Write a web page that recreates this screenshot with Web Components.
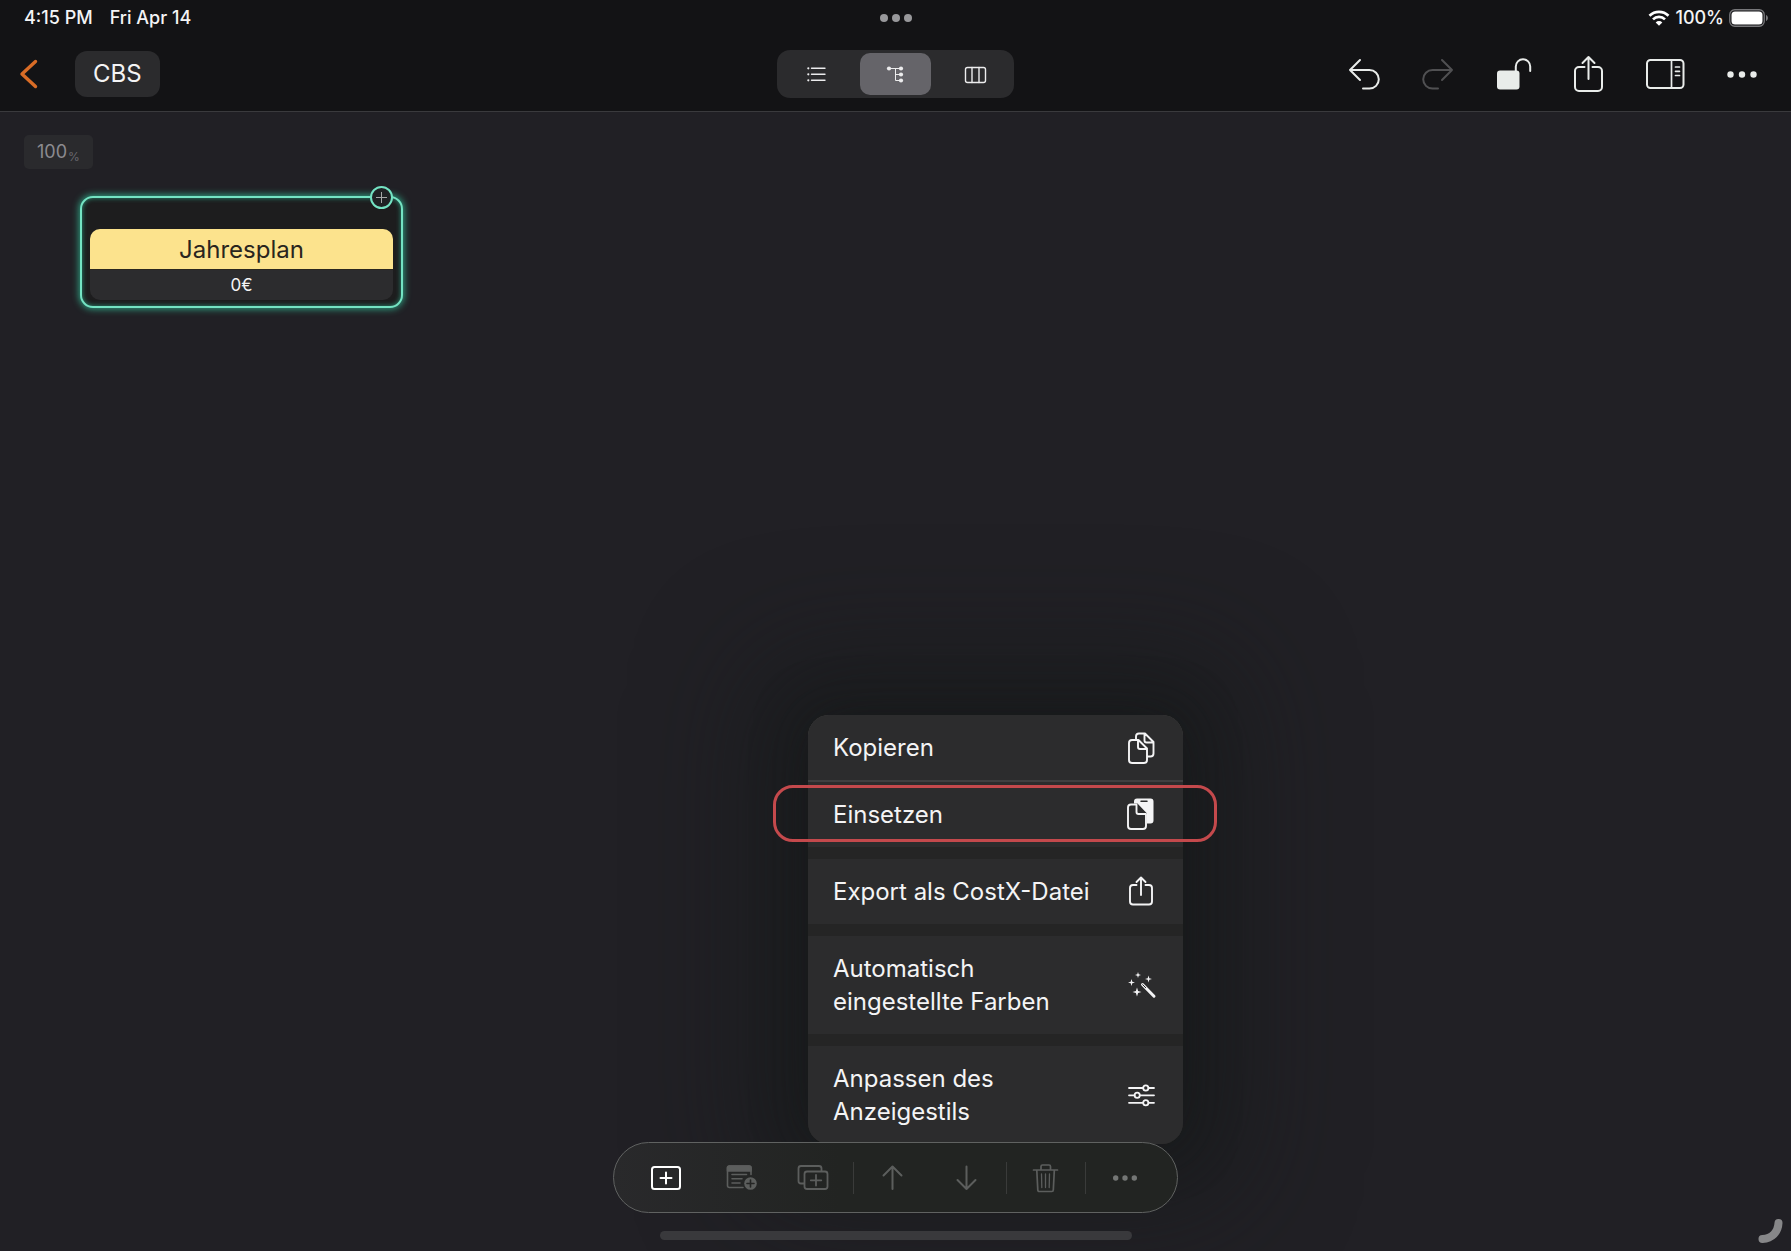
<!DOCTYPE html>
<html lang="de">
<head>
<meta charset="utf-8">
<title>CBS</title>
<style>
  html, body { height: 100%; margin: 0; }
  body { background: #212025; color: #f4f4f5; font-family: Inter, "Liberation Sans", sans-serif; overflow: hidden; }
</style>
</head>
<body>
<cost-app></cost-app>
<script>
const ICONS = {
  back: '<path d="M30.5 11.5 17 24 30.5 36.5" stroke-width="3.4"/>',
  undo: '<path d="M23 10 13 20l10 10M13 20H32.5a9.3 9.3 0 0 1 0 18.6H26"/>',
  redo: '<path d="M29 10 39 20l-10 10M39 20H19.5a9.3 9.3 0 0 0 0 18.6h5.5"/>',
  lock: '<rect x="8" y="20.5" width="22.5" height="19" rx="3" fill="currentColor" stroke="none"/><path d="M26.8 21v-4.5a7.2 7.2 0 0 1 14.4 0V21"/>',
  share: '<path d="M19.5 17H14a4 4 0 0 0-4 4v16a4 4 0 0 0 4 4h19a4 4 0 0 0 4-4V21a4 4 0 0 0-4-4h-5.5M23.5 29V7M17.5 13l6-6 6 6"/>',
  sidebar: '<rect x="6" y="10" width="36.5" height="28" rx="3.5"/><path d="M30.5 10v28M34.5 17h4M34.5 21.3h4M34.5 25.5h4" stroke-width="1.7"/>',
  dots: '<g fill="currentColor" stroke="none"><circle cx="13.5" cy="24.5" r="3.2"/><circle cx="25" cy="24.5" r="3.2"/><circle cx="36.5" cy="24.5" r="3.2"/></g>',
  list: '<path d="M18.500 18.3H32M18.5 24.3H32M18.5 30.3H32" stroke-width="1.4"/><g fill="currentColor" stroke="none"><circle cx="15.3" cy="18.3" r="1.1"/><circle cx="15.3" cy="24.3" r="1.1"/><circle cx="15.3" cy="30.3" r="1.1"/></g>',
  tree: '<path d="M17 18.5h12M23.5 18.5v12h5.5M23.5 24.5h5.5" stroke-width="1"/><g fill="currentColor" stroke="none"><circle cx="17" cy="18.5" r="2.1"/><circle cx="29" cy="18.5" r="2.1"/><circle cx="29" cy="24.5" r="2.1"/><circle cx="29" cy="30.5" r="2.1"/></g>',
  columns: '<rect x="14.5" y="17.5" width="20" height="15" rx="2"/><path d="M21 17.5v15M28 17.5v15"/>',
  copy: '<path d="M12 19a3 3 0 0 1 3-3h6.5l8.5 8.5V36a3 3 0 0 1-3 3H15a3 3 0 0 1-3-3zM21 16V23a2 2 0 0 0 2 2h7M19 15.500V12.5a3 3 0 0 1 3-3h6l8.5 8.5V29.500a3 3 0 0 1-3 3H30.5M27.5 9.5v7a2 2 0 0 0 2 2h7"/>',
  paste: '<path d="M17 12.500v-2a3 3 0 0 1 3-3h13.5a3 3 0 0 1 3 3v19a3 3 0 0 1-3 3h-3.500V22.500l-9.5-10z" fill="currentColor" stroke="none"/><path d="M24 10.300h6" stroke="#2c2c2d" stroke-width="1.5"/><path d="M19.5 13.500v9.500h9.500z" fill="#2c2c2d" stroke="none"/><path d="M19.5 13.500H14a3 3 0 0 0-3 3V35a3 3 0 0 0 3 3h12a3 3 0 0 0 3-3V23H21.500a2 2 0 0 1-2-2z"/>',
  export: '<path d="M19.500 17H16a3 3 0 0 0-3 3v13.5a3 3 0 0 0 3 3h16a3 3 0 0 0 3-3V20a3 3 0 0 0-3-3h-3.500M24 27V10M19.500 14l4.500-4.500 4.500 4.500"/>',
  wand: '<g fill="currentColor" stroke="none"><path d="M14.500 18l.8 2.700 2.700.8-2.700.8-.8 2.700-.8-2.700-2.700-.8 2.700-.8z"/><path d="M21 11l.7 2.300 2.300.7-2.300.7-.7 2.300-.7-2.300-2.300-.7 2.300-.7z"/><path d="M31.500 14.500l.8 2.700 2.700.8-2.700.8-.8 2.700-.8-2.700-2.700-.8 2.700-.8z"/><path d="M20 26.500l1.100 3.400 3.400 1.100-3.400 1.100-1.100 3.400-1.100-3.400-3.400-1.100 3.400-1.100z"/></g><path d="M25.500 23.500 37 35.200" stroke-width="3"/><path d="M25.700 23.700l3 3" stroke="#2c2c2d" stroke-width="1"/>',
  sliders: '<path d="M12 17h14M31.500 17H37M12 24.300h5.500M23 24.300H37M12 31.800h14M31.500 31.800H37"/><circle cx="28.800" cy="17" r="2.600"/><circle cx="20.200" cy="24.300" r="2.600"/><circle cx="28.800" cy="31.800" r="2.600"/>',
  add: '<rect x="10" y="13" width="28" height="22" rx="2.5"/><path d="M24 18.5v11M18.5 24h11"/>',
  note: '<path d="M27 33.500H13.5a2 2 0 0 1-2-2V14a2 2 0 0 1 2-2h19.5a2 2 0 0 1 2 2V20.5M16 20.5h14.5M16 24.800h10M16 29h8"/><path d="M11.5 17v-3a2 2 0 0 1 2-2h19.5a2 2 0 0 1 2 2v3z" fill="currentColor"/><circle cx="34.5" cy="29.5" r="6.3" fill="currentColor" stroke="none"/><path d="M34.5 26v7M31 29.5h7" stroke="#242524"/>',
  duplicate: '<path d="M14 29.500h-3a2.5 2.5 0 0 1-2.5-2.5v-12.5a2.5 2.5 0 0 1 2.5-2.5h18a2.5 2.5 0 0 1 2.5 2.5v2.5"/><rect x="14.5" y="17.500" width="23" height="17.5" rx="2.5"/><path d="M26 21v10.5M20.8 26.3h10.5"/>',
  up: '<path d="M23.5 35V12.5M14.5 21.5l9-9 9 9"/>',
  down: '<path d="M23.5 12.500v22.5M14.5 26l9 9 9-9"/>',
  trash: '<path d="M11.5 16h24M19 15.500v-3a1.500 1.500 0 0 1 1.500-1.500h6.500a1.500 1.500 0 0 1 1.500 1.500v3M14.800 16.500l1 19.500a1.500 1.500 0 0 0 1.500 1.500h12.500a1.500 1.500 0 0 0 1.500-1.500l1-19.500"/><path d="M19.500 20l.3 13.500M23.500 20V33.500M27.500 20l-.3 13.500" stroke-width="1.300"/>',
  more: '<g fill="currentColor" stroke="none"><circle cx="14.7" cy="24" r="2.700"/><circle cx="24" cy="24" r="2.700"/><circle cx="33.300" cy="24" r="2.700"/></g>'
};

const define = (name, html) => customElements.define(name, class extends HTMLElement {
  constructor() {
    super();
    this.attachShadow({ mode: 'open' }).innerHTML = html;
  }
});

customElements.define('app-icon', class extends HTMLElement {
  constructor() { super(); this.attachShadow({ mode: 'open' }); }
  connectedCallback() {
    this.shadowRoot.innerHTML = `<style>:host{display:block;width:48px;height:48px;flex:none}svg{display:block;overflow:visible}</style>
      <svg width="48" height="48" viewBox="0 0 48 48" fill="none" stroke="currentColor" stroke-width="${this.getAttribute('weight') || 2}" stroke-linecap="round" stroke-linejoin="round" aria-hidden="true">${ICONS[this.getAttribute('name')]}</svg>`;
  }
});

const RESET = ':host,*{box-sizing:border-box}button{appearance:none;border:0;margin:0;padding:0;background:none;color:inherit;font:inherit;display:flex;align-items:center;justify-content:center}';

define('status-bar', `<style>${RESET}
  :host{display:grid;grid-template-columns:1fr auto 1fr;align-items:center;height:36px;padding:0 22px;font-size:18px;font-weight:500;line-height:24px}
  .left{display:flex;gap:17px;padding-left:2px}
  .dots{display:flex;gap:4px}.dots i{width:8px;height:8px;border-radius:50%;background:#98989b}
  .right{display:flex;justify-content:flex-end;align-items:center;gap:5px}
  svg{display:block}
</style>
<div class="left"><span>4:15 PM</span><span>Fri Apr 14</span></div>
<div class="dots"><i></i><i></i><i></i></div>
<div class="right">
  <svg width="22" height="16" viewBox="0 0 22 16" fill="none" stroke="#fff" stroke-width="2.7"><path d="M1.5 5.8a13.6 13.6 0 0 1 19 0M5 9.4a8.6 8.6 0 0 1 12 0"/><path d="M11 15.8l-3.3-3.4a4.7 4.7 0 0 1 6.6 0z" fill="#fff" stroke="none"/></svg>
  <span>100%</span>
  <svg width="40" height="18" viewBox="0 0 40 18"><rect x=".75" y=".75" width="34.5" height="16.5" rx="5" fill="none" stroke="#77777a" stroke-width="1.3"/><rect x="2.5" y="2.5" width="31" height="13" rx="3.5" fill="#fff"/><path d="M37 6c2.6.8 2.6 5.2 0 6z" fill="#77777a"/></svg>
</div>`);

define('nav-bar', `<style>${RESET}
  :host{display:grid;grid-template-columns:1fr auto 1fr;align-items:center;height:76px;padding:0 12px 0 5px;border-bottom:1px solid #3a3a3d}
  .left{display:flex;align-items:center;gap:22px}
  .back{color:#d96c26}
  .title{height:46px;padding:0 18px;border-radius:12px;background:#2b2b2d;font-size:24px;line-height:32px}
  .seg{display:flex;height:48px;padding:3px 0;border-radius:13px;background:#2b2b2d;color:#ececed;margin-left:7px}
  .seg button{width:71px;margin:0 4px;border-radius:10px}
  .seg button[aria-pressed=true]{background:#656469}
  .right{display:flex;justify-content:flex-end;color:#e9ecea}
  .right button{width:76px}
  .right button:disabled{color:#505052}
</style>
<div class="left"><button class="back" aria-label="Zurück"><app-icon name="back"></app-icon></button><button class="title">CBS</button></div>
<div class="seg" role="group" aria-label="Ansicht">
  <button aria-label="Liste" aria-pressed="false"><app-icon name="list"></app-icon></button>
  <button aria-label="Baum" aria-pressed="true"><app-icon name="tree"></app-icon></button>
  <button aria-label="Spalten" aria-pressed="false"><app-icon name="columns" weight="1.4"></app-icon></button>
</div>
<div class="right">
  <button aria-label="Widerrufen"><app-icon name="undo"></app-icon></button>
  <button aria-label="Wiederholen" disabled><app-icon name="redo"></app-icon></button>
  <button aria-label="Sperre"><app-icon name="lock"></app-icon></button>
  <button aria-label="Teilen"><app-icon name="share"></app-icon></button>
  <button aria-label="Seitenleiste"><app-icon name="sidebar"></app-icon></button>
  <button aria-label="Mehr"><app-icon name="dots"></app-icon></button>
</div>`);

define('zoom-chip', `<style>${RESET}
  :host{display:block}
  button{height:34px;padding:0 13px;border-radius:5px;background:#2a2a2d;color:#8c8b90;font-size:18px;line-height:24px}
  small{font-size:12px;line-height:12px;color:#69686d;align-self:flex-end;padding-bottom:6px;margin-left:1px}
</style><button>100<small>%</small></button>`);

define('cost-node', `<style>${RESET}
  :host{display:block;position:relative;width:323px;padding:31px 8px 6px;border:2px solid #74e3c3;border-radius:13px;background:#1d1d1e;box-shadow:0 0 7px 1px #2fa384,inset 0 0 5px #2a9176}
  .card{border-radius:10px;overflow:hidden;text-align:center;background:#2c2c2e}
  .name{height:41px;line-height:41px;font-size:24px;background:#fce38d;color:#29251d;border-bottom:1px solid #2a271f}
  .sum{height:30px;line-height:30px;font-size:17px}
  .plus{position:absolute;top:-12px;right:8px;width:23px;height:23px;border:2px solid #74e3c3;border-radius:50%;background:#1f2224}
  svg{display:block}
</style>
<div class="card"><div class="name"><slot name="name"></slot></div><div class="sum"><slot name="sum"></slot></div></div>
<button class="plus" aria-label="Hinzufügen"><svg width="11" height="11" viewBox="0 0 11 11" stroke="#a6a8a8"><path d="M5.5 0v11M0 5.5h11"/></svg></button>`);

define('menu-row', `<style>${RESET}
  :host{display:block;position:relative}
  button{width:100%;min-height:65px;padding:8px 18px 8px 25px;justify-content:space-between;gap:12px;text-align:left;font-size:24px;line-height:33px;background:#2c2c2d;border-radius:var(--row-radius,0)}
  :host([tall]) button{min-height:98px}
  .ring{display:none;position:absolute;inset:3px -34px 5px -35px;border:3px solid #c4494c;border-radius:20px;pointer-events:none}
  :host([marked]) .ring{display:block}
</style><button role="menuitem"><span><slot></slot></span><slot name="icon"></slot></button><div class="ring"></div>`);

define('action-menu', `<style>${RESET}
  :host{display:flex;flex-direction:column;gap:12px;width:375px;border-radius:21px;background:#252525;
    box-shadow:0 0 50px rgba(20,22,22,.5),0 0 110px 60px rgba(23,27,27,.6)}
  .pair{display:flex;flex-direction:column;gap:2px;border-radius:21px 21px 0 0;background:#404041}
  .top{--row-radius:21px 21px 0 0}
  .bottom{--row-radius:0 0 21px 21px}
</style>
<div class="pair">
  <menu-row class="top">Kopieren<app-icon slot="icon" name="copy" weight="1.9"></app-icon></menu-row>
  <menu-row marked>Einsetzen<app-icon slot="icon" name="paste" weight="1.9"></app-icon></menu-row>
</div>
<menu-row>Export als CostX-Datei<app-icon slot="icon" name="export" weight="1.9"></app-icon></menu-row>
<menu-row tall>Automatisch<br>eingestellte Farben<app-icon slot="icon" name="wand"></app-icon></menu-row>
<menu-row tall class="bottom">Anpassen des<br>Anzeigestils<app-icon slot="icon" name="sliders" weight="1.8"></app-icon></menu-row>`);

define('tool-bar', `<style>${RESET}
  :host{display:block;position:relative}
  .bar{position:relative;display:flex;align-items:center;height:71px;padding:0 15px;border:1px solid #606261;border-radius:36px;background:linear-gradient(90deg,#29292b,#222422 40%,#222422);color:#5c5e5d}
  button{width:74px}
  .on{color:#fff}
  .more{color:#747675}
  hr{width:1px;height:32px;margin:0 2px;border:0;background:#3a3b3a}
  action-menu{position:absolute;right:-5px;bottom:69px}
</style>
<action-menu role="menu"></action-menu>
<div class="bar">
  <button class="on" aria-label="Element hinzufügen"><app-icon name="add"></app-icon></button>
  <button aria-label="Notiz hinzufügen"><app-icon name="note" weight="1.6"></app-icon></button>
  <button aria-label="Duplizieren"><app-icon name="duplicate" weight="1.8"></app-icon></button>
  <hr>
  <button aria-label="Nach oben"><app-icon name="up"></app-icon></button>
  <button aria-label="Nach unten"><app-icon name="down"></app-icon></button>
  <hr>
  <button aria-label="Löschen"><app-icon name="trash" weight="1.7"></app-icon></button>
  <hr>
  <button class="more" aria-label="Mehr"><app-icon name="more"></app-icon></button>
</div>`);

define('cost-app', `<style>${RESET}
  :host{display:flex;flex-direction:column;height:100vh;position:relative}
  header{background:#131315}
  main{flex:1;display:flex;flex-direction:column;align-items:flex-start;padding:23px 24px;gap:27px}
  cost-node{margin-left:56px}
  footer{display:flex;flex-direction:column;align-items:center;gap:18px;padding-bottom:11px}
  tool-bar{z-index:1}
  .home{width:472px;height:9px;border-radius:5px;background:#39393c;z-index:1}
  .corner{position:absolute;right:8px;bottom:7px;display:block}
</style>
<header><status-bar></status-bar><nav-bar></nav-bar></header>
<main>
  <zoom-chip></zoom-chip>
  <cost-node><span slot="name">Jahresplan</span><span slot="sum">0€</span></cost-node>
</main>
<footer><tool-bar></tool-bar><div class="home"></div></footer>
<svg class="corner" width="25" height="26" viewBox="0 0 25 26" fill="none" stroke="#878789" stroke-width="8" stroke-linecap="round"><path d="M20.5 5C20 14 14 20.5 4.5 21"/></svg>`);
</script>
</body>
</html>
